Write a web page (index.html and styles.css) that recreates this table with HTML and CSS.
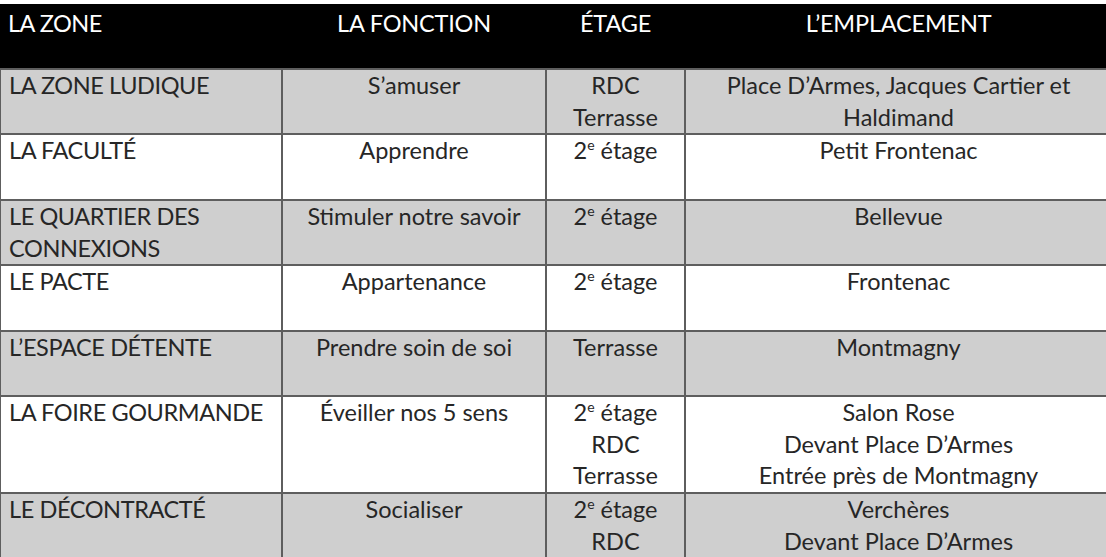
FILE: index.html
```html
<!DOCTYPE html>
<html lang="fr">
<head>
<meta charset="utf-8">
<title>Zones</title>
<link rel="stylesheet" href="styles.css">
</head>
<body>
<table class="grid">
  <colgroup>
    <col class="c1"><col class="c2"><col class="c3"><col class="c4">
  </colgroup>
  <thead>
    <tr>
      <th class="left">LA ZONE</th>
      <th>LA FONCTION</th>
      <th>ÉTAGE</th>
      <th>L’EMPLACEMENT</th>
    </tr>
  </thead>
  <tbody>
    <tr class="gray">
      <td class="left">LA ZONE LUDIQUE</td>
      <td>S’amuser</td>
      <td>RDC<br>Terrasse</td>
      <td>Place D’Armes, Jacques Cartier et<br>Haldimand</td>
    </tr>
    <tr>
      <td class="left">LA FACULTÉ<br>&nbsp;</td>
      <td>Apprendre</td>
      <td>2<sup>e</sup> étage</td>
      <td>Petit Frontenac</td>
    </tr>
    <tr class="gray">
      <td class="left">LE QUARTIER DES<br>CONNEXIONS</td>
      <td>Stimuler notre savoir</td>
      <td>2<sup>e</sup> étage</td>
      <td>Bellevue</td>
    </tr>
    <tr>
      <td class="left">LE PACTE<br>&nbsp;</td>
      <td>Appartenance</td>
      <td>2<sup>e</sup> étage</td>
      <td>Frontenac</td>
    </tr>
    <tr class="gray">
      <td class="left">L’ESPACE DÉTENTE<br>&nbsp;</td>
      <td>Prendre soin de soi</td>
      <td>Terrasse</td>
      <td>Montmagny</td>
    </tr>
    <tr>
      <td class="left">LA FOIRE GOURMANDE</td>
      <td>Éveiller nos 5 sens</td>
      <td>2<sup>e</sup> étage<br>RDC<br>Terrasse</td>
      <td>Salon Rose<br>Devant Place D’Armes<br>Entrée près de Montmagny</td>
    </tr>
    <tr class="gray">
      <td class="left">LE DÉCONTRACTÉ</td>
      <td>Socialiser</td>
      <td>2<sup>e</sup> étage<br>RDC<br>Terrasse</td>
      <td>Verchères<br>Devant Place D’Armes<br>Entrée près de Montmagny</td>
    </tr>
  </tbody>
</table>
</body>
</html>
```

FILE: styles.css
```css
html, body {
  margin: 0;
  padding: 0;
  background: #ffffff;
  overflow: hidden;
}
body {
  padding-top: 4px;
  width: 1106px;
  height: 557px;
}
.grid {
  border-collapse: collapse;
  table-layout: fixed;
  width: 1112px;
  margin-left: -1px;
  font-family: Lato, "Liberation Sans", sans-serif;
  font-weight: 400;
  color: #262626;
}
.c1 { width: 282px; }
.c2 { width: 264px; }
.c3 { width: 139px; }
.c4 { width: 427px; }
.grid th {
  background: #000000;
  color: #ffffff;
  font-weight: 400;
  font-size: 23.5px;
  line-height: 28px;
  height: 65px;
  padding: 5px 0 0 0;
  box-sizing: border-box;
  vertical-align: top;
  text-align: center;
  border: none;
  letter-spacing: -0.2px;
}
.grid td {
  font-size: 23.5px;
  line-height: 31.7px;
  padding: 0;
  vertical-align: top;
  text-align: center;
  border: 2px solid #5e5e5e;
  white-space: nowrap;
}
.grid th.left, .grid td.left {
  text-align: left;
  padding-left: 8px;
  letter-spacing: -0.4px;
}
.grid th.left {
  letter-spacing: -0.5px;
}
.grid tr.gray td {
  background: #cfcfcf;
}
sup {
  font-size: 14px;
  line-height: 0;
  vertical-align: 9px;
}
```
